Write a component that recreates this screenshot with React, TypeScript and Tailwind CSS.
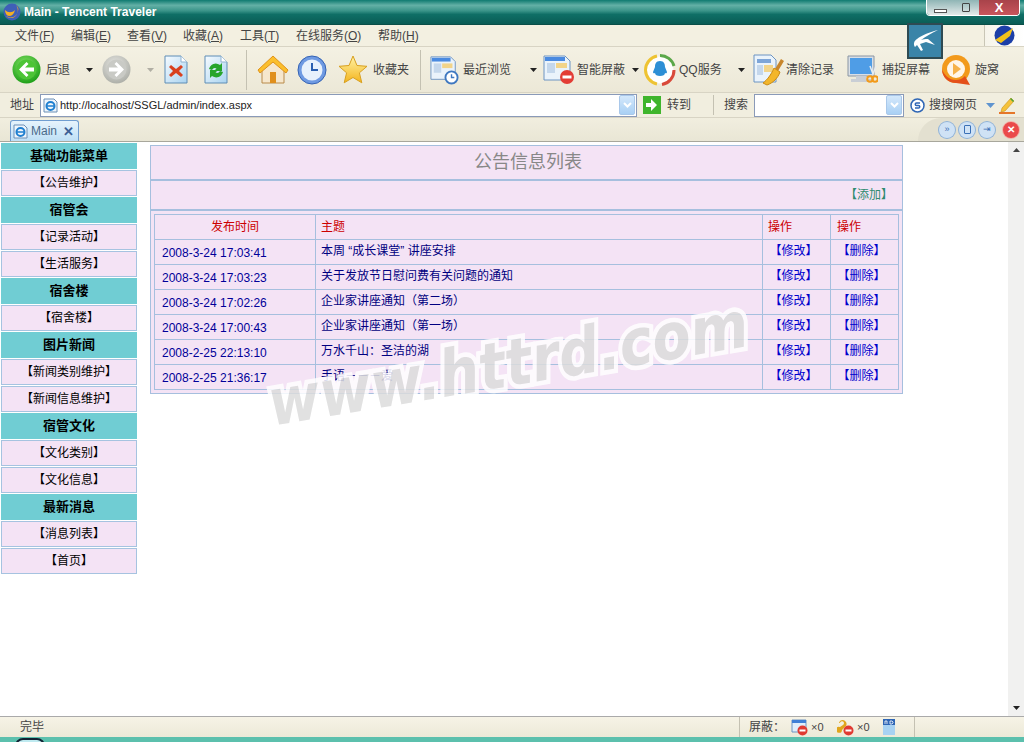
import type { ReactNode } from 'react';

const cjk = 'font-["Liberation_Sans","Noto_Sans_CJK_SC",sans-serif]';

function Caret({ className = '' }: { className?: string }) {
  return (
    <svg width="7" height="4" viewBox="0 0 7 4" className={className}>
      <path d="M0 0h7L3.500 4z" fill="#222" />
    </svg>
  );
}

function RoundArrow({ dir, on }: { dir: 'left' | 'right'; on: boolean }) {
  const id = on ? 'gBack' : 'gFwd';
  return (
    <svg width="29" height="29" viewBox="0 0 29 29">
      <defs>
        <radialGradient id={id} cx="45%" cy="35%" r="70%">
          <stop offset="0" stopColor={on ? '#8be66a' : '#e8e8e4'} />
          <stop offset="1" stopColor={on ? '#169a12' : '#a9aba4'} />
        </radialGradient>
      </defs>
      <circle cx="14.500" cy="14.500" r="14" fill={`url(#${id})`} />
      <circle cx="14.500" cy="14.500" r="10" fill={on ? '#4cc436' : '#c9cac5'} />
      <g transform={dir === 'right' ? 'matrix(-1 0 0 1 29 0)' : undefined}>
        <path d="M14.500 7 7 14.500l7.500 7.500 2-2-3.500-3.500h9v-4h-9l3.500-3.500z" fill="#fff" />
      </g>
    </svg>
  );
}

function PageIcon({ kind }: { kind: 'stop' | 'refresh' }) {
  return (
    <svg width="24" height="29" viewBox="0 0 24 29">
      <defs>
        <linearGradient id={`pg${kind}`} x1="0" y1="0" x2="1" y2="1">
          <stop offset="0" stopColor="#f6fbff" />
          <stop offset="1" stopColor="#a9d3f0" />
        </linearGradient>
      </defs>
      <path d="M1 1h16l6 6v21H1z" fill={`url(#pg${kind})`} stroke="#5f8db5" />
      <path d="M17 1v6h6" fill="#fff" stroke="#8fb2d0" />
      {kind === 'stop' ? (
        <path d="M7 10l5 4 5-4 2 2-4 4 4 4-2 2-5-4-5 4-2-2 4-4-4-4z" fill="#d9411e" />
      ) : (
        <>
          <path d="M5 14a7 7 0 0 1 11-4l2-2v8h-8l2.500-2.500A3.500 3.500 0 0 0 8 15z" fill="#27a52b" />
          <path d="M19 17a7 7 0 0 1-11 4l-2 2v-8h8l-2.500 2.500A3.500 3.500 0 0 0 16 16z" fill="#27a52b" />
        </>
      )}
    </svg>
  );
}

function HomeIcon() {
  return (
    <svg width="32" height="29" viewBox="0 0 32 29">
      <path d="M5 13v15h22V13L16 4z" fill="#f6e7cd" stroke="#b98a4a" />
      <path d="M13 17h6v11h-6z" fill="#e08f1c" />
      <path d="M1 15 16 1l15 14-2 3L16 7 3 18z" fill="#fbbf2c" stroke="#e0921a" />
    </svg>
  );
}

function ClockIcon() {
  return (
    <svg width="30" height="30" viewBox="0 0 30 30">
      <circle cx="15" cy="15" r="14" fill="#6f9ae2" stroke="#3563b4" />
      <circle cx="15" cy="15" r="10.500" fill="#e8f1fc" />
      <path d="M15 8v7h6" fill="none" stroke="#2b5fb0" strokeWidth="2" />
    </svg>
  );
}

function StarIcon() {
  return (
    <svg width="30" height="29" viewBox="0 0 30 29">
      <defs>
        <linearGradient id="gStar" x1="0" y1="0" x2="0" y2="1">
          <stop offset="0" stopColor="#fff3a6" />
          <stop offset="1" stopColor="#f4b41c" />
        </linearGradient>
      </defs>
      <path d="M15 1l4 9.500 10 .8-7.600 6.500 2.400 10L15 22.500 6.200 27.800l2.400-10L1 11.300l10-.8z" fill="url(#gStar)" stroke="#d8a020" />
    </svg>
  );
}

function WindowIcon({ badge }: { badge: 'clock' | 'block' }) {
  return (
    <svg width={badge === 'clock' ? 29 : 31} height="31" viewBox="0 0 31 31">
      <path d="M1 2h21l5 5v19H1z" fill="#eaf3fb" stroke="#6d94c2" />
      <path d="M2 3h20v4H2z" fill="#4a8ae0" />
      <path d="M4 9h8v10H4z" fill="#c4d7ec" />
      <path d="M13 9h11v5H13z" fill="#f2d489" />
      {badge === 'clock' ? (
        <>
          <circle cx="23" cy="24" r="6.500" fill="#fff" stroke="#3f78c0" strokeWidth="2" />
          <path d="M23 20.500V24h3" fill="none" stroke="#3f78c0" strokeWidth="1.500" />
        </>
      ) : (
        <>
          <circle cx="24" cy="23" r="7" fill="#e33d35" />
          <path d="M19.500 21.500h9v3h-9z" fill="#fff" />
        </>
      )}
    </svg>
  );
}

function QQIcon() {
  return (
    <svg width="32" height="32" viewBox="0 0 32 32">
      <circle cx="16" cy="16" r="13.500" fill="#fff" />
      <path d="M16 1.500A14.500 14.500 0 0 1 30 12" fill="none" stroke="#5ba84a" strokeWidth="3" />
      <path d="M30 16a14.500 14.500 0 0 1-12 14.500" fill="none" stroke="#d94a3a" strokeWidth="3" />
      <path d="M13 30A14.500 14.500 0 0 1 1.500 16 14.500 14.500 0 0 1 13 2" fill="none" stroke="#eec332" strokeWidth="3" />
      <path d="M16 7c4 0 5 3 5 6l2 5c0 2-2 1-2 1 0 2-2 3-5 3s-5-1-5-3c0 0-2 1-2-1l2-5c0-3 1-6 5-6z" fill="#2d8fd5" />
    </svg>
  );
}

function BroomIcon() {
  return (
    <svg width="33" height="32" viewBox="0 0 33 32">
      <path d="M1 1h17l5 5v22H1z" fill="#eaf3fb" stroke="#6d94c2" />
      <path d="M4 5h14v4H4z" fill="#7da5d8" />
      <path d="M4 11h6v10H4z" fill="#c4d7ec" />
      <path d="M11 11h9v7h-9z" fill="#f2d489" />
      <path d="M28 5l3 2-6 10-3-2z" fill="#c8862c" />
      <path d="M21 14l6 4c-2 6-7 11-13 13l-4-2c4-3 8-8 11-15z" fill="#f3b62a" stroke="#c98a16" />
    </svg>
  );
}

function MonitorIcon() {
  return (
    <svg width="31" height="29" viewBox="0 0 31 29">
      <path d="M1 1h26v20H1z" fill="#d9dfe6" stroke="#8a95a2" />
      <path d="M3 3h22v16H3z" fill="#4f9de6" />
      <path d="M9 21h10v3h5v3H4v-3h5z" fill="#c9ced5" />
      <path d="M23 11l3 8 3-8" fill="none" stroke="#e7ecf0" strokeWidth="1.500" />
      <circle cx="23" cy="24" r="2.800" fill="none" stroke="#f29a1a" strokeWidth="2" />
      <circle cx="28" cy="24" r="2.800" fill="none" stroke="#f29a1a" strokeWidth="2" />
    </svg>
  );
}

function SwirlIcon() {
  return (
    <svg width="32" height="32" viewBox="0 0 32 32">
      <circle cx="16" cy="15" r="14" fill="#f29a1c" />
      <path d="M2 15c0 8 6 14 14 14l14 2-5-9c-3 3-6 4-9 4C9 26 4 21 2 15z" fill="#e4501a" />
      <circle cx="16" cy="15" r="9" fill="#fff6e8" />
      <path d="M13 9l8 6-8 6z" fill="#f6b24a" />
    </svg>
  );
}

function Drop() {
  return (
    <div className="flex h-[20px] w-[16px] items-center justify-center rounded-[2px] border border-[#a9c8ea] bg-[linear-gradient(#d4e8fb,#a9d0f4)]">
      <svg width="9" height="6" viewBox="0 0 9 6">
        <path d="M1 1l3.500 3.500L8 1" fill="none" stroke="#fff" strokeWidth="2" />
      </svg>
    </div>
  );
}

function IeIcon({ size = 15 }: { size?: number }) {
  return (
    <svg width={size} height={size} viewBox="0 0 15 15">
      <path d="M1 1h10l3 3v10H1z" fill="#eef5fc" stroke="#6d8fb5" />
      <circle cx="7.500" cy="8" r="4" fill="none" stroke="#1f7fd0" strokeWidth="2" />
      <path d="M4 8h7" stroke="#1f7fd0" strokeWidth="1.500" />
    </svg>
  );
}

function RoundBtn({ children, red = false }: { children: ReactNode; red?: boolean }) {
  return (
    <div
      className={
        red
          ? 'ml-[4px] flex h-[16px] w-[16px] items-center justify-center rounded-full bg-[#ea4a4a] ring-1 ring-[#f2b0a8]'
          : 'flex h-[16px] w-[16px] items-center justify-center rounded-full bg-[#cfe2f5] ring-1 ring-[#8fb2d8]'
      }
    >
      {children}
    </div>
  );
}

function BlockMini({ kind }: { kind: 'window' | 'pop' }) {
  return (
    <svg width="17" height="17" viewBox="0 0 17 17">
      {kind === 'window' ? (
        <>
          <path d="M1 1h14v12H1z" fill="#dfeefb" stroke="#6d94c2" />
          <path d="M1 1h14v3H1z" fill="#3f7fd6" />
        </>
      ) : (
        <path d="M6 1a4 4 0 0 1 3 6l-4 4a3 3 0 1 1-2-3l3-2a2 2 0 1 0-3-2H2a4 4 0 0 1 4-3z" fill="#e0a51c" />
      )}
      <circle cx="11.500" cy="11.500" r="5" fill="#e03a32" />
      <path d="M8.500 10.500h6v2h-6z" fill="#fff" />
    </svg>
  );
}

const menus: [string, string][] = [
  ['文件', 'F'],
  ['编辑', 'E'],
  ['查看', 'V'],
  ['收藏', 'A'],
  ['工具', 'T'],
  ['在线服务', 'O'],
  ['帮助', 'H'],
];

const menuWidths = ['w-[56px]', 'w-[56px]', 'w-[56px]', 'w-[57px]', 'w-[56px]', 'w-[82px]', 'w-[50px]'];

const sidebar: { text: string; head?: boolean }[] = [
  { text: '基础功能菜单', head: true },
  { text: '【公告维护】' },
  { text: '宿管会', head: true },
  { text: '【记录活动】' },
  { text: '【生活服务】' },
  { text: '宿舍楼', head: true },
  { text: '【宿舍楼】' },
  { text: '图片新闻', head: true },
  { text: '【新闻类别维护】' },
  { text: '【新闻信息维护】' },
  { text: '宿管文化', head: true },
  { text: '【文化类别】' },
  { text: '【文化信息】' },
  { text: '最新消息', head: true },
  { text: '【消息列表】' },
  { text: '【首页】' },
];

const rows = [
  ['2008-3-24 17:03:41', '本周 “成长课堂” 讲座安排'],
  ['2008-3-24 17:03:23', '关于发放节日慰问费有关问题的通知'],
  ['2008-3-24 17:02:26', '企业家讲座通知（第二场）'],
  ['2008-3-24 17:00:43', '企业家讲座通知（第一场）'],
  ['2008-2-25 22:13:10', '万水千山：圣洁的湖'],
  ['2008-2-25 21:36:17', '手语－－－爱'],
];

export default function App() {
  return (
    <div className={`relative flex h-[742px] w-[1024px] flex-col overflow-hidden bg-white text-[12px] text-[#444] ${cjk}`}>
      {/* title bar */}
      <div className="flex h-[25px] shrink-0 items-center border-b border-[#0a4f48] bg-[linear-gradient(#0f7a70_0%,#63b0a6_22%,#3a9489_45%,#0f6f66_60%,#0a5c55_100%)] pl-[2px]">
        <svg width="20" height="20" viewBox="0 0 20 20">
          <circle cx="10" cy="10" r="8.500" fill="#3f5fb8" />
          <path d="M4 14c5 3 11 1 12-5 1-2 0-4-2-6 4 5 1 13-5 13-2 0-4-1-5-2z" fill="#f5b023" />
          <path d="M3 8c3 3 7 3 10 0-1 4-3 6-6 6-2 0-4-3-4-6z" fill="#f5b023" />
        </svg>
        <span className="ml-[2px] text-[12px] font-bold text-white">Main - Tencent Traveler</span>
      </div>
      {/* window buttons */}
      <div className="absolute top-0 left-[926px] flex h-[16px] w-[94px] overflow-hidden rounded-b-[4px] border border-t-0 border-white">
        <div className="flex w-[26px] items-end justify-center bg-[linear-gradient(#8fb5b5,#e4eaea)] pb-[2px]">
          <div className="h-[4px] w-[13px] border border-[#555] bg-white" />
        </div>
        <div className="flex w-[26px] items-center justify-center bg-[linear-gradient(#8fb5b5,#e4eaea)]">
          <div className="h-[9px] w-[8px] rounded-[1px] border border-[#444]" />
        </div>
        <div className="flex flex-1 items-center justify-center bg-[linear-gradient(#a8434a,#c9555c)] text-[13px] leading-none font-bold text-white">
          X
        </div>
      </div>
      {/* logo tile */}
      <div className="absolute top-[23px] left-[907px] z-10 flex h-[36px] w-[36px] items-center justify-center border-[2px] border-[#2e4a52] bg-[#3a84a8]">
        <svg width="30" height="30" viewBox="0 0 30 30">
          <path d="M28 4C20 6 12 9 7 13c-3 2-4 5-2 8l2-2 4 6 2-1-3-6 6-2 9 3-7-6c-3 0-5 0-7 1 5-4 11-7 17-10z" fill="#fff" />
        </svg>
      </div>

      {/* menu bar */}
      <div className="flex h-[22px] shrink-0 items-center border-b border-[#d8d4c4] bg-[#f3f0e1] pl-[15px]">
        {menus.map(([name, key], i) => (
          <span key={key} className={`${menuWidths[i]} shrink-0`}>
            {name}(<span className="underline">{key}</span>)
          </span>
        ))}
        <div className="ml-auto flex h-full w-[40px] items-center justify-center border-l border-[#c9c6b6] bg-[linear-gradient(90deg,#f6f4ea,#fff)]">
          <svg width="21" height="21" viewBox="0 0 21 21">
            <circle cx="10.500" cy="10.500" r="10" fill="#1c3fa8" />
            <path d="M1 15 19 3l-3 8-9 7z" fill="#f1c21b" />
          </svg>
        </div>
      </div>

      {/* toolbar */}
      <div className="flex h-[46px] shrink-0 items-center border-b border-[#d8d4c4] bg-[linear-gradient(#f4f1e3,#ece8d7)] pl-[12px] whitespace-nowrap">
        <RoundArrow dir="left" on />
        <span className="ml-[5px] w-[40px]">后退</span>
        <Caret />
        <div className="ml-[9px]"><RoundArrow dir="right" on={false} /></div>
        <Caret className="ml-[16px] opacity-30" />
        <div className="ml-[10px]"><PageIcon kind="stop" /></div>
        <div className="ml-[16px]"><PageIcon kind="refresh" /></div>
        <div className="ml-[18px] h-[40px] w-px bg-[#c4c1b2]" />
        <div className="ml-[10px]"><HomeIcon /></div>
        <div className="ml-[8px]"><ClockIcon /></div>
        <div className="ml-[11px]"><StarIcon /></div>
        <span className="ml-[5px] w-[36px]">收藏夹</span>
        <div className="ml-[11px] h-[40px] w-px bg-[#c4c1b2]" />
        <div className="ml-[9px]"><WindowIcon badge="clock" /></div>
        <span className="ml-[4px] w-[50px]">最近浏览</span>
        <Caret className="ml-[17px]" />
        <div className="ml-[6px]"><WindowIcon badge="block" /></div>
        <span className="ml-[3px] w-[49px]">智能屏蔽</span>
        <Caret className="ml-[6px]" />
        <div className="ml-[5px]"><QQIcon /></div>
        <span className="ml-[3px] w-[41px]">QQ服务</span>
        <Caret className="ml-[18px]" />
        <div className="ml-[8px]"><BroomIcon /></div>
        <span className="w-[48px]">清除记录</span>
        <div className="ml-[13px]"><MonitorIcon /></div>
        <span className="ml-[4px] w-[48px]">捕捉屏幕</span>
        <div className="ml-[10px]"><SwirlIcon /></div>
        <span className="ml-[3px]">旋窝</span>
      </div>

      {/* address bar */}
      <div className="flex h-[25px] shrink-0 items-center border-b border-[#d8d4c4] bg-[#f1eedf] pl-[10px]">
        <span className="w-[30px]">地址</span>
        <div className="flex h-[23px] w-[597px] items-center border border-[#8a9ab8] bg-white pl-[2px]">
          <IeIcon />
          <span className="ml-[2px] text-[11px] text-[#222]">http://localhost/SSGL/admin/index.aspx</span>
          <div className="ml-auto mr-px"><Drop /></div>
        </div>
        <svg width="18" height="18" viewBox="0 0 18 18" className="ml-[6px]">
          <path d="M0 0h18v18H0z" fill="#3fb52c" />
          <path d="M8 3l6 6-6 6v-4H3V7h5z" fill="#fff" />
        </svg>
        <span className="ml-[6px] w-[46px]">转到</span>
        <div className="h-[20px] w-px bg-[#c4c1b2]" />
        <span className="ml-[10px] w-[30px]">搜索</span>
        <div className="flex h-[23px] w-[150px] items-center justify-end border border-[#8a9ab8] bg-white pr-px">
          <Drop />
        </div>
        <svg width="15" height="15" viewBox="0 0 15 15" className="ml-[6px]">
          <circle cx="7.500" cy="7.500" r="6.500" fill="#fff" stroke="#2f66b5" strokeWidth="1.500" />
          <path d="M10 5H6.500a1.200 1.200 0 0 0 0 2.500h2a1.200 1.200 0 0 1 0 2.500H5" fill="none" stroke="#2f66b5" strokeWidth="1.500" />
        </svg>
        <span className="ml-[4px] w-[57px]">搜搜网页</span>
        <svg width="9" height="5" viewBox="0 0 9 5"><path d="M0 0h9L4.500 5z" fill="#5f94cf" /></svg>
        <svg width="16" height="17" viewBox="0 0 16 17" className="ml-[4px]">
          <path d="M3 11 12 1l3 3-9 10-4 1z" fill="#f5c23a" stroke="#c79018" strokeWidth=".6" />
          <path d="M11 2l3 3 1-1-3-3z" fill="#4aa83a" />
          <path d="M0 15h16v2H0z" fill="#e5772a" />
        </svg>
      </div>

      {/* tab strip */}
      <div className="relative flex h-[24px] shrink-0 items-end border-b border-[#a8a79c] bg-[linear-gradient(#f1eedf,#e9e6d5)] pl-[10px]">
        <div className="flex h-[21px] w-[69px] items-center rounded-t-[3px] border border-b-0 border-[#6f9dd0] bg-[linear-gradient(#e6f3fc,#bfe0f6)] pl-[2px]">
          <IeIcon />
          <span className="ml-[3px] text-[#4a6a8a]">Main</span>
          <span className="ml-[6px] text-[13px] leading-none font-bold text-[#3d5f96]">✕</span>
        </div>
        <div className="absolute top-0 right-0 flex h-full w-[106px] items-center justify-end gap-[4px] rounded-tl-[24px] bg-[#e3e0d0] pr-[5px]">
          <RoundBtn><span className="text-[9px] leading-none text-[#3a70b5]">»</span></RoundBtn>
          <RoundBtn><div className="h-[9px] w-[7px] rounded-[1px] border border-[#3a70b5]" /></RoundBtn>
          <RoundBtn><span className="text-[9px] leading-none text-[#3a70b5]">⇥</span></RoundBtn>
          <RoundBtn red><span className="text-[10px] leading-none font-bold text-white">✕</span></RoundBtn>
        </div>
      </div>

      {/* content */}
      <div className="relative flex min-h-0 flex-1">
        <div className="flex w-[138px] shrink-0 flex-col pt-px pl-px">
          {sidebar.map((item) =>
            item.head ? (
              <div
                key={item.text}
                className="mb-px flex h-[26px] w-[136px] items-start justify-center bg-[#70cdd3] pt-[3px] text-[13px] font-bold text-black"
              >
                {item.text}
              </div>
            ) : (
              <div
                key={item.text}
                className="mb-px flex h-[26px] w-[136px] items-center justify-center border border-[#a6c3e0] bg-[#f4e3f5] text-black"
              >
                {item.text}
              </div>
            ),
          )}
        </div>

        <div className="ml-[12px] w-[753px] shrink-0 pt-[3px]">
          <div className="border border-[#a6bfde] bg-[#f4e3f5]">
            <div className="flex h-[35px] items-center justify-center border-b-[2px] border-[#a6bfde] pl-[3px] text-[18px] text-[#888]">
              公告信息列表
            </div>
            <div className="flex h-[30px] items-center justify-end border-b-[2px] border-[#a6bfde] pr-[9px] text-[#2e8b6f]">
              【添加】
            </div>
            <div className="px-[3px] pt-[3px] pb-[3px]">
              <table className="w-[744px] table-fixed border-collapse">
                <colgroup>
                  <col className="w-[161px]" />
                  <col className="w-[447px]" />
                  <col className="w-[68px]" />
                  <col className="w-[68px]" />
                </colgroup>
                <thead>
                  <tr className="h-[25px] text-[#cc0000]">
                    <th className="border border-[#a6bfde] pb-px text-center font-normal">发布时间</th>
                    <th className="border border-[#a6bfde] pb-px pl-[5px] text-left font-normal">主题</th>
                    <th className="border border-[#a6bfde] pb-px pl-[5px] text-left font-normal">操作</th>
                    <th className="border border-[#a6bfde] pb-px pl-[6px] text-left font-normal">操作</th>
                  </tr>
                </thead>
                <tbody>
                  {rows.map(([date, title]) => (
                    <tr key={date} className="h-[25px]">
                      <td className="border border-[#a6bfde] pt-px pl-[7px] text-[#000099]">{date}</td>
                      <td className="border border-[#a6bfde] pb-[2px] pl-[5px] text-[#000080]">{title}</td>
                      <td className="border border-[#a6bfde] pr-[6px] pb-[2px] text-center text-[#0000cc]">【修改】</td>
                      <td className="border border-[#a6bfde] pr-[6px] pb-[2px] text-center text-[#0000cc]">【删除】</td>
                    </tr>
                  ))}
                </tbody>
              </table>
            </div>
          </div>
        </div>

        {/* scrollbar */}
        <div className="ml-auto flex w-[16px] shrink-0 flex-col items-center justify-between bg-[#f1f1f0] py-[6px]">
          <svg width="7" height="4" viewBox="0 0 7 4"><path d="M3.500 0 7 4H0z" fill="#444" /></svg>
          <Caret />
        </div>

        {/* watermark over the page */}
        <div className="pointer-events-none absolute top-[238px] left-[274px] z-20 origin-bottom-left -rotate-[9.500deg] scale-y-[1.150] font-['DejaVu_Sans',sans-serif] text-[56px] leading-none font-bold whitespace-nowrap text-[#dcdcdc] italic opacity-85 [paint-order:stroke_fill] [-webkit-text-stroke:8px_white]">
          www.httrd.com
        </div>
      </div>

      {/* status bar */}
      <div className="flex h-[21px] shrink-0 items-center border-t border-[#aaa] bg-[linear-gradient(#f6f3e6,#ece9d8)] pl-[20px]">
        <span className="w-[719px]">完毕</span>
        <div className="flex h-full w-[176px] items-center border-x border-[#c4c1b2] pl-[9px]">
          <span className="w-[42px]">屏蔽：</span>
          <BlockMini kind="window" />
          <span className="ml-[3px] w-[26px] text-[11px]">×0</span>
          <BlockMini kind="pop" />
          <span className="ml-[3px] w-[26px] text-[11px]">×0</span>
          <svg width="12" height="16" viewBox="0 0 12 16">
            <path d="M0 0h12v16H0z" fill="#a8d2f2" />
            <path d="M0 0h12v6H0z" fill="#2f66b5" />
            <path d="M2 5V2h2v3M7 2v3h2l1-1V3L9 2z" fill="none" stroke="#fff" strokeWidth=".8" />
          </svg>
        </div>
      </div>

      {/* bottom edge */}
      <div className="relative h-[5px] shrink-0 overflow-hidden bg-[#5cc0ad]">
        <div className="absolute top-[1px] left-[15px] h-[16px] w-[30px] rounded-full border-[2px] border-[#123] bg-[#bfeaf0]" />
      </div>
    </div>
  );
}
